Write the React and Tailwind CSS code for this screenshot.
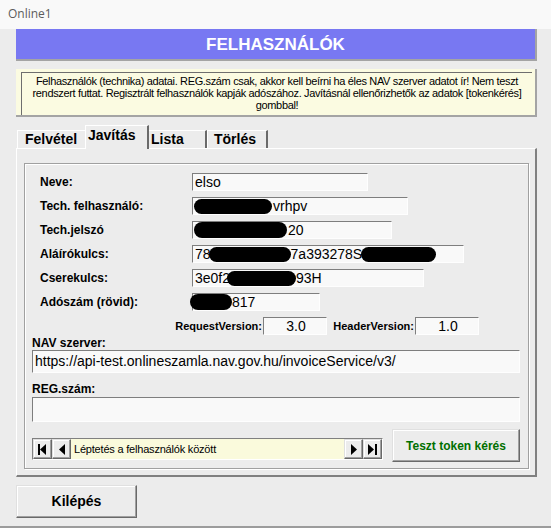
import React from "react";

const btn =
  "bg-[#ececec] border border-t-[#e0e0e0] border-l-[#e0e0e0] border-r-[#696969] border-b-[#696969] shadow-[inset_-1px_-1px_0_#a0a0a0,inset_1px_1px_0_#ffffff]";

const inputCls =
  "h-[18px] bg-[#f9f9f9] border border-t-[#7e7e7e] border-l-[#7e7e7e] border-r-[#fefefe] border-b-[#fefefe] flex items-center pl-[2px] text-[14px] whitespace-nowrap overflow-visible";

function Field({ label, wcls, children }) {
  return (
    <div className="flex items-center h-[18px]">
      <div className="w-[152px] text-[12px] font-bold leading-none">{label}</div>
      <div className={`${inputCls} ${wcls}`}>{children}</div>
    </div>
  );
}

const First = () => (
  <svg width="9" height="11" viewBox="0 0 9 11">
    <rect x="0" y="0" width="2" height="11" fill="#000" />
    <polygon points="8,0 2,5.5 8,11" fill="#000" />
  </svg>
);
const Prev = () => (
  <svg width="6" height="11" viewBox="0 0 6 11">
    <polygon points="6,0 0,5.5 6,11" fill="#000" />
  </svg>
);
const Next = () => (
  <svg width="6" height="11" viewBox="0 0 6 11">
    <polygon points="0,0 6,5.5 0,11" fill="#000" />
  </svg>
);
const Last = () => (
  <svg width="9" height="11" viewBox="0 0 9 11">
    <polygon points="0,0 6,5.5 0,11" fill="#000" />
    <rect x="7" y="0" width="2" height="11" fill="#000" />
  </svg>
);

function NavBtn({ children }) {
  return (
    <div className={`w-[19px] h-[20px] flex items-center justify-center ${btn}`}>{children}</div>
  );
}

export default function App() {
  return (
    <div className="w-[551px] h-[528px] bg-[#ececec] flex flex-col overflow-hidden font-['Liberation_Sans',Arial,sans-serif] text-black">
      <div className="h-[29px] shrink-0 bg-[#f9f9f9] flex items-center pl-[8px] pb-[2px] text-[12px] text-[#5c5c5c] font-['Open_Sans',sans-serif]">
        Online1
      </div>
      <div className="ml-[16px] w-[521px] flex flex-col">
        <div className="h-[32px] bg-[#7878f2] border-r-2 border-b-2 border-[#a4a4a4] flex items-center justify-center text-white font-bold text-[17px] pt-[1px]">
          FELHASZNÁLÓK
        </div>

        <div className="mt-[8px] h-[48px] bg-[#fbfbe1] border-r-2 border-b-2 border-[#a4a4a4] pt-[3px] pl-[5px] pr-[3px]">
          <div className="h-full border-t border-l border-[#6e6e6e] text-[11px] leading-[12px] text-center whitespace-nowrap tracking-[-0.35px] pt-[2px]">
            Felhasználók (technika) adatai. REG.szám csak, akkor kell beírni ha éles NAV szerver adatot ír! Nem teszt
            <br />
            rendszert futtat. Regisztrált felhasználók kapják adószához. Javításnál ellenőrizhetők az adatok [tokenkérés]
            <br />
            gombbal!
          </div>
        </div>

        <div className="mt-[8px] h-[23px] flex items-end pl-[1px] relative z-10 text-[14px] font-bold">
          <div className="w-[68px] h-[18px] border-t border-l border-white flex items-center pl-[7px]">Felvétel</div>
          <div className="w-[64px] h-[24px] mb-[-1px] bg-[#ececec] border-t border-l border-white border-r-2 border-r-[#6a6a6a] flex items-center pl-[2px] pb-[4px]">
            Javítás
          </div>
          <div className="w-[58px] h-[18px] border-t border-white border-r-2 border-r-[#6a6a6a] flex items-center pl-[2px]">Lista</div>
          <div className="w-[61px] h-[18px] border-t border-l border-white border-r-2 border-r-[#6a6a6a] flex items-center pl-[6px]">Törlés</div>
        </div>

        <div className="border-t border-l border-white border-r-2 border-b-2 border-r-[#808080] border-b-[#808080] pt-[14px] pl-[7px] pr-[6px] pb-[6px]">
          <div className="border border-[#a0a0a0] shadow-[inset_1px_1px_0_#ffffff,1px_1px_0_#ffffff] pt-[9px] pl-[7px] pr-[8px] pb-[6px] flex flex-col">
            <div className="pl-[8px] flex flex-col gap-[6px]">
              <Field label="Neve:" wcls="w-[176px]">elso</Field>
              <Field label="Tech. felhasználó:" wcls="w-[216px]">
                <span className="inline-block w-[78px] h-[15px] bg-black rounded-full -ml-[1px] mr-[1px]" />
                vrhpv
              </Field>
              <Field label="Tech.jelszó" wcls="w-[200px]">
                <span className="inline-block w-[93px] h-[16px] bg-black rounded-full -ml-[1px] mr-[1px]" />
                20
              </Field>
              <Field label="Aláírókulcs:" wcls="w-[272px]">
                78
                <span className="inline-block w-[82px] h-[15px] bg-black rounded-full -ml-[2px]" />
                7a393278S
                <span className="inline-block w-[75px] h-[15px] bg-black rounded-full -ml-[1px]" />
              </Field>
              <Field label="Cserekulcs:" wcls="w-[232px]">
                3e0f2
                <span className="inline-block w-[69px] h-[15px] bg-black rounded-full -ml-[3px]" />
                93H
              </Field>
              <Field label="Adószám (rövid):" wcls="w-[128px]">
                <span className="inline-block w-[42px] h-[16px] bg-black rounded-full -ml-[5px]" />
                817
              </Field>
            </div>

            <div className="mt-[6px] h-[18px] flex items-center text-[11px] font-bold">
              <div className="w-[231px] text-right pr-[1px]">RequestVersion:</div>
              <div className={`${inputCls} w-[64px] justify-center pl-0 text-[12px] font-normal`}>3.0</div>
              <div className="w-[88px] text-right pr-[1px]">HeaderVersion:</div>
              <div className={`${inputCls} w-[64px] justify-center pl-0 text-[12px] font-normal`}>1.0</div>
            </div>

            <div className="mt-[1px] h-[14px] flex items-center text-[12px] font-bold">NAV szerver:</div>
            <div className="h-[23px] bg-[#f9f9f9] border border-t-[#7e7e7e] border-l-[#7e7e7e] border-r-[#fefefe] border-b-[#fefefe] flex items-center pl-[2px] text-[14px] whitespace-nowrap">
              https://api-test.onlineszamla.nav.gov.hu/invoiceService/v3/
            </div>

            <div className="mt-[9px] h-[14px] flex items-center text-[12px] font-bold">REG.szám:</div>
            <div className="mt-[1px] h-[25px] bg-[#f9f9f9] border border-t-[#7e7e7e] border-l-[#7e7e7e] border-r-[#fefefe] border-b-[#fefefe]" />

            <div className="mt-[7px] flex items-start">
              <div className="mt-[9px] w-[351px] h-[22px] border border-t-[#808080] border-l-[#808080] border-r-[#ffffff] border-b-[#ffffff] flex items-center">
                <NavBtn><First /></NavBtn>
                <NavBtn><Prev /></NavBtn>
                <div className="flex-1 h-[20px] bg-[#fafadc] flex items-center pl-[3px] text-[11px] tracking-[-0.2px] whitespace-nowrap">
                  Léptetés a felhasználók között
                </div>
                <NavBtn><Next /></NavBtn>
                <NavBtn><Last /></NavBtn>
              </div>
              <div className={`ml-auto w-[128px] h-[33px] flex items-center justify-center text-[12px] font-bold text-[#007000] ${btn}`}>
                Teszt token kérés
              </div>
            </div>
          </div>
        </div>

        <div className={`mt-[8px] w-[121px] h-[33px] flex items-center justify-center text-[14px] font-bold ${btn}`}>
          Kilépés
        </div>
      </div>
      <div className="mt-auto h-[2px] bg-[#9c9c9c]" />
    </div>
  );
}
